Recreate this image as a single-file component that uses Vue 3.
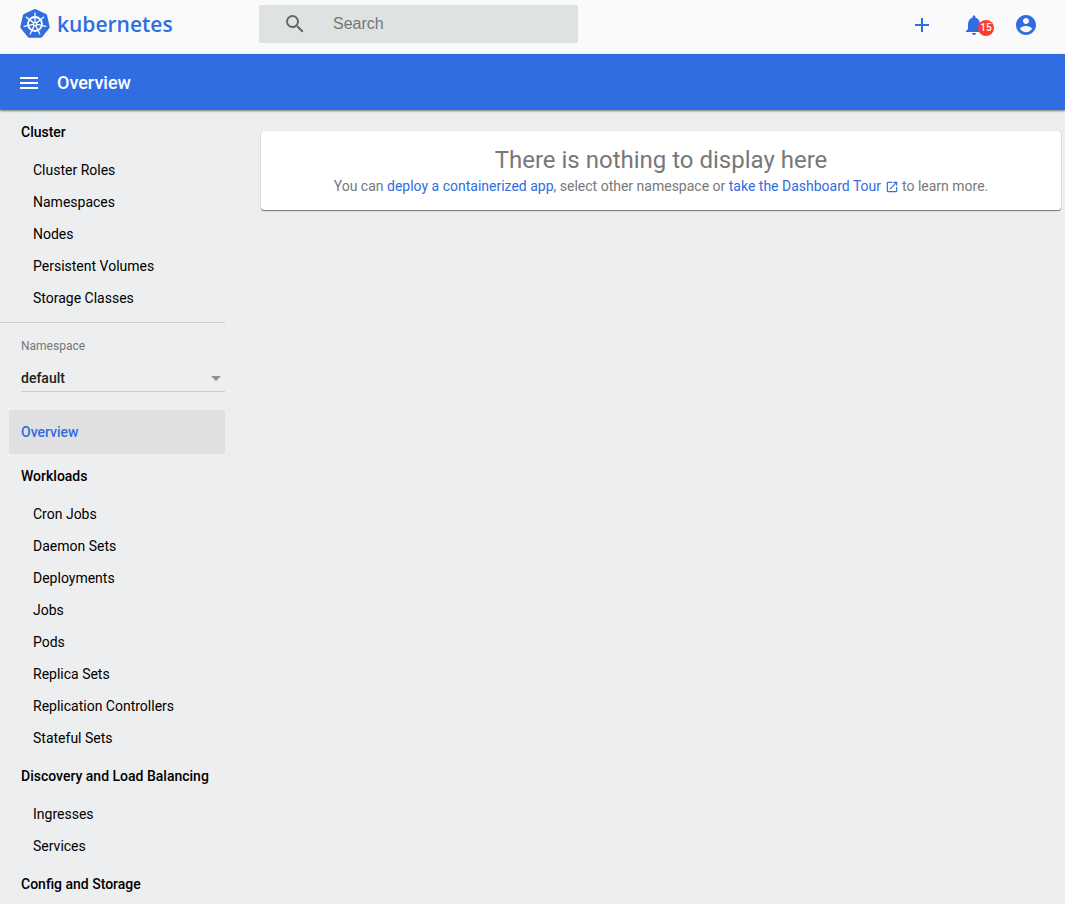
<script setup>
import { ref } from 'vue'

const search = ref('')
const namespace = ref('default')

const cluster = ['Cluster Roles', 'Namespaces', 'Nodes', 'Persistent Volumes', 'Storage Classes']
const groups = [
  {
    title: 'Workloads',
    items: ['Cron Jobs', 'Daemon Sets', 'Deployments', 'Jobs', 'Pods', 'Replica Sets', 'Replication Controllers', 'Stateful Sets'],
  },
  { title: 'Discovery and Load Balancing', items: ['Ingresses', 'Services'] },
  { title: 'Config and Storage', items: [] },
]

const polar = (r, k) => {
  const a = -Math.PI / 2 + (k * 2 * Math.PI) / 7
  return `${(16 + r * Math.cos(a)).toFixed(2)},${(16 + r * Math.sin(a)).toFixed(2)}`
}
const steps = [0, 1, 2, 3, 4, 5, 6]
const heptagon = steps.map((k) => polar(13, k)).join(' ')
const spokes = steps.map((k) => `M${polar(1, k)}L${polar(11, k)}`).join('')
</script>

<template>
  <div class="app">
    <header class="top">
      <a class="brand" href="#" aria-label="kubernetes home">
        <svg class="logo" viewBox="0 0 32 32" aria-hidden="true">
          <polygon :points="heptagon" fill="currentColor" stroke="currentColor" stroke-width="4" stroke-linejoin="round" />
          <g fill="none" stroke="#fff">
            <circle cx="16" cy="16" r="7" stroke-width="1.8" />
            <path :d="spokes" stroke-width="1.3" stroke-linecap="round" />
          </g>
          <circle cx="16" cy="16" r="2.2" fill="#fff" />
          <circle cx="16" cy="16" r="0.9" fill="currentColor" />
        </svg>
        <span class="wordmark">kubernetes</span>
      </a>
      <label class="search">
        <svg class="icon" viewBox="0 0 24 24" aria-hidden="true">
          <path d="M15.5 14h-.79l-.28-.27A6.47 6.47 0 0 0 16 9.5 6.5 6.5 0 1 0 9.5 16c1.61 0 3.09-.59 4.23-1.57l.27.28v.79l5 4.99L20.49 19l-4.99-5zm-6 0a4.5 4.5 0 1 1 0-9 4.5 4.5 0 0 1 0 9z" />
        </svg>
        <input v-model="search" type="text" placeholder="Search" aria-label="Search" />
      </label>
      <div class="actions">
        <button type="button" aria-label="Create">
          <svg class="icon" viewBox="0 0 24 24"><path d="M19 13h-6v6h-2v-6H5v-2h6V5h2v6h6v2z" /></svg>
        </button>
        <button type="button" aria-label="Notifications">
          <svg class="icon" viewBox="0 0 24 24">
            <path d="M12 22c1.1 0 2-.9 2-2h-4c0 1.1.89 2 2 2zm6-6v-5c0-3.07-1.64-5.64-4.5-6.32V4c0-.83-.67-1.5-1.5-1.5s-1.5.67-1.5 1.5v.68C7.63 5.36 6 7.92 6 11v5l-2 2v1h16v-1l-2-2z" />
          </svg>
          <span class="badge">15</span>
        </button>
        <button type="button" aria-label="Account">
          <svg class="icon" viewBox="0 0 24 24">
            <path d="M12 2C6.48 2 2 6.48 2 12s4.48 10 10 10 10-4.48 10-10S17.52 2 12 2zm0 3c1.66 0 3 1.34 3 3s-1.34 3-3 3-3-1.34-3-3 1.34-3 3-3zm0 14.2c-2.5 0-4.71-1.28-6-3.22.03-1.99 4-3.08 6-3.08 1.99 0 5.97 1.09 6 3.08-1.29 1.94-3.5 3.22-6 3.22z" />
          </svg>
        </button>
      </div>
    </header>

    <div class="bar">
      <button type="button" aria-label="Toggle menu">
        <svg class="icon" viewBox="0 0 24 24"><path d="M3 18h18v-2H3v2zm0-5h18v-2H3v2zm0-7v2h18V6H3z" /></svg>
      </button>
      <h1>Overview</h1>
    </div>

    <div class="body">
      <nav class="side">
        <section class="cluster">
          <a class="head" href="#">Cluster</a>
          <a v-for="item in cluster" :key="item" class="item" href="#">{{ item }}</a>
        </section>
        <div class="namespace">
          <label for="ns">Namespace</label>
          <div class="picker">
            <select id="ns" v-model="namespace">
              <option value="default">default</option>
            </select>
            <svg class="arrow" viewBox="0 0 10 5" aria-hidden="true"><path d="M0 0h10L5 5z" /></svg>
          </div>
        </div>
        <a class="head active" href="#">Overview</a>
        <section v-for="group in groups" :key="group.title">
          <a class="head" href="#">{{ group.title }}</a>
          <a v-for="item in group.items" :key="item" class="item" href="#">{{ item }}</a>
        </section>
      </nav>

      <main>
        <div class="card">
          <h2>There is nothing to display here</h2>
          <p>
            You can <a href="#">deploy a containerized app</a>, select other namespace or
            <a href="#">take the Dashboard Tour
              <svg class="launch" viewBox="0 0 24 24" aria-hidden="true">
                <path d="M19 19H5V5h7V3H5a2 2 0 0 0-2 2v14a2 2 0 0 0 2 2h14c1.1 0 2-.9 2-2v-7h-2v7zM14 3v2h3.59l-9.83 9.83 1.41 1.41L19 6.41V10h2V3h-7z" />
              </svg></a>
            to learn more.
          </p>
        </div>
      </main>
    </div>
  </div>
</template>

<style>
body {
  background: #edeef0;
}
</style>

<style scoped>
.app {
  --blue: #2f6de1;
  display: flex;
  flex-direction: column;
  height: 100vh;
  overflow: hidden;
  background: #edeef0;
  color: #000;
  font: 14px/20px Roboto, sans-serif;
}
a {
  color: var(--blue);
  text-decoration: none;
}
button {
  position: relative;
  display: flex;
  padding: 0;
  border: 0;
  background: none;
  color: inherit;
}
.icon {
  width: 24px;
  height: 24px;
  fill: currentColor;
}
.top {
  display: flex;
  flex: none;
  align-items: center;
  box-sizing: border-box;
  height: 54px;
  padding: 0 27px 6px 19px;
  background: #fafafa;
}
.brand {
  display: flex;
  align-items: center;
  gap: 6px;
  width: 240px;
}
.logo {
  width: 32px;
  height: 32px;
}
.wordmark {
  font: 600 21px/24px "Open Sans", sans-serif;
}
.search {
  display: flex;
  align-items: center;
  box-sizing: border-box;
  width: calc(30vw - 1px);
  height: 38px;
  padding-left: 24px;
  border-radius: 2px;
  background: #dee2e2;
  color: #666;
}
.search input {
  flex: 1;
  min-width: 0;
  margin-left: 26px;
  padding: 0;
  border: 0;
  outline: 0;
  background: none;
  color: #333;
  font: 16px/20px "Liberation Sans", Arial, sans-serif;
}
.search input::placeholder {
  color: #757575;
}
.actions {
  display: flex;
  gap: 28px;
  margin-left: auto;
  padding-top: 2px;
  color: var(--blue);
}
.badge {
  position: absolute;
  top: 7px;
  left: 16px;
  width: 16px;
  border-radius: 50%;
  background: #ff3d2e;
  color: #fff;
  font: 500 10px/16px Roboto, sans-serif;
  text-align: center;
}
.bar {
  z-index: 1;
  display: flex;
  flex: none;
  align-items: center;
  gap: 16px;
  box-sizing: border-box;
  height: 56px;
  padding: 2px 0 0 17px;
  background: var(--blue);
  box-shadow: 0 1px 2px rgba(0, 0, 0, 0.5);
  color: #fff;
}
.bar h1 {
  margin: 0;
  font-size: 18px;
  font-weight: 500;
  line-height: 24px;
}
.body {
  display: flex;
  flex: 1;
  min-height: 0;
}
.side {
  flex: none;
  width: 225px;
  overflow-y: auto;
  scrollbar-width: none;
}
.cluster {
  padding-bottom: 8px;
  border-bottom: 1px solid #cdced0;
}
.head {
  display: block;
  margin-left: 9px;
  padding-left: 12px;
  border-radius: 2px;
  color: #000;
  font-weight: 500;
  line-height: 44px;
}
.head.active {
  background: #e0e0e0;
  color: var(--blue);
}
.item {
  display: block;
  padding-left: 33px;
  color: #000;
  line-height: 32px;
}
.namespace {
  margin: 13px 0 18px 21px;
}
.namespace label {
  display: block;
  color: #757575;
  font-size: 12px;
  line-height: 20px;
}
.picker {
  position: relative;
  margin-top: 9px;
  border-bottom: 1px solid #cdced0;
}
.picker select {
  display: block;
  width: 100%;
  height: 26px;
  padding: 0;
  border: 0;
  appearance: none;
  background: none;
  color: #212121;
  font: 500 14px/20px Roboto, sans-serif;
}
.arrow {
  position: absolute;
  top: 11px;
  right: 4px;
  width: 10px;
  height: 5px;
  fill: #8e8f91;
  pointer-events: none;
}
main {
  flex: 1;
  padding: 21px 4px 0 36px;
}
.card {
  padding: 13px 16px 14px;
  border-radius: 3px;
  background: #fff;
  box-shadow: 0 0 1px rgba(0, 0, 0, 0.2), 0 1px 1px rgba(0, 0, 0, 0.5);
  color: #787878;
  text-align: center;
}
.card h2 {
  margin: 0;
  font-size: 24px;
  font-weight: 400;
  line-height: 32px;
}
.card p {
  margin: 0;
}
.launch {
  width: 14px;
  height: 14px;
  fill: currentColor;
  vertical-align: -3px;
}
</style>
